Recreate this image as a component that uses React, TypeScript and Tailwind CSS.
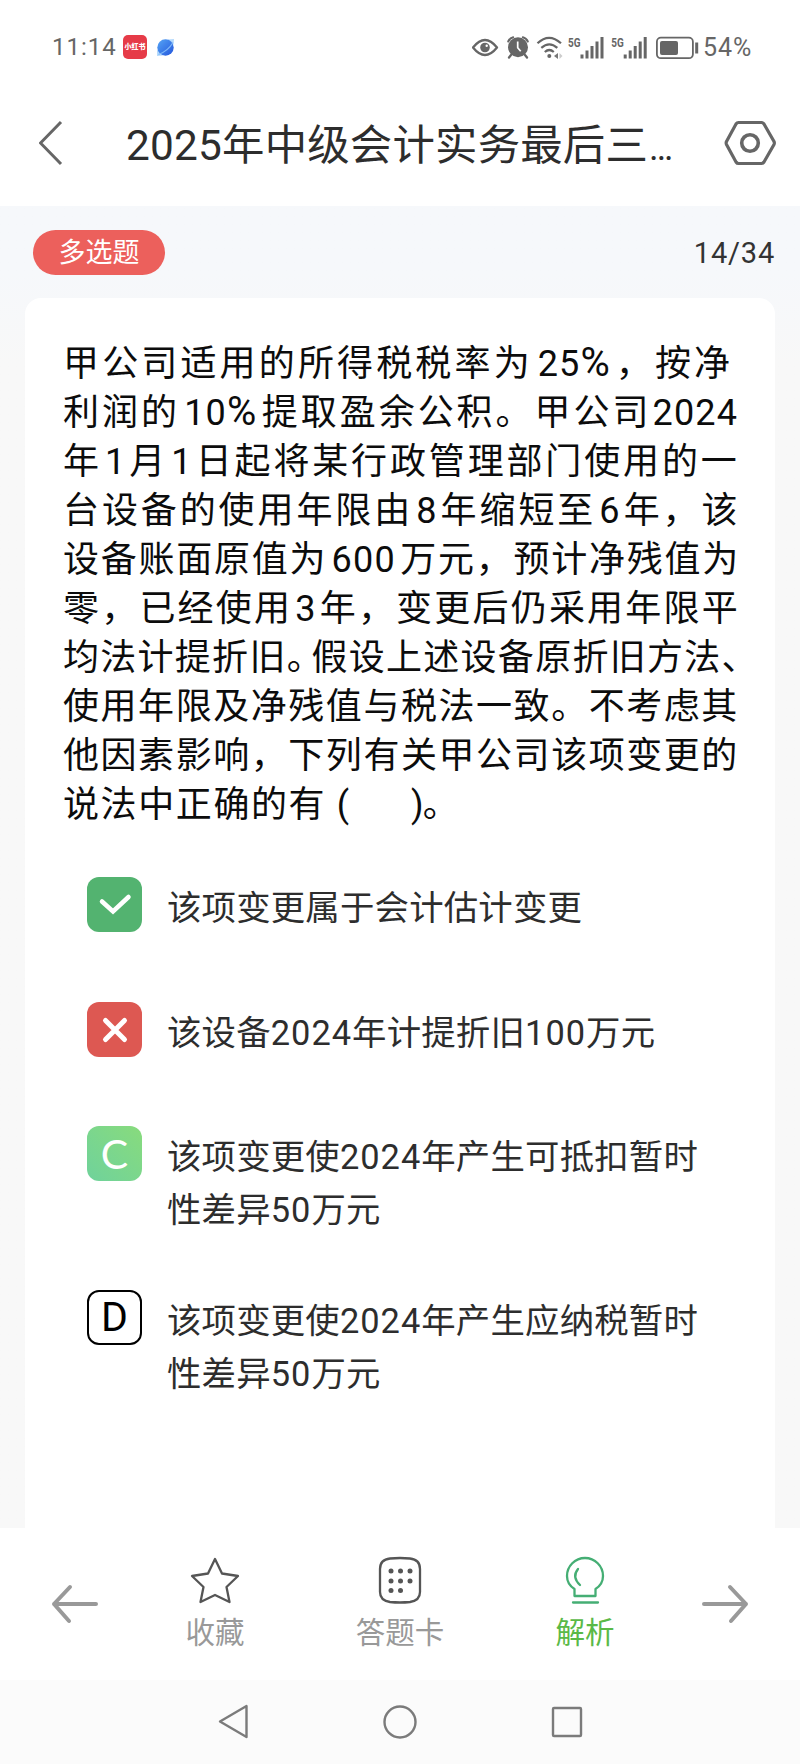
import type { ReactNode } from 'react';

// one entry per printed line, each line is spaced out to fill the column
const questionLines = [
  { text: '甲公司适用的所得税税率为25%，按净', spacing: 'tracking-[3.150px]' },
  { text: '利润的10%提取盈余公积。甲公司2024', spacing: 'tracking-[2.950px]' },
  { text: '年1月1日起将某行政管理部门使用的一', spacing: 'tracking-[2.850px]' },
  { text: '台设备的使用年限由8年缩短至6年，该', spacing: 'tracking-[2.9px]' },
  { text: '设备账面原值为600万元，预计净残值为', spacing: 'tracking-[1.750px]' },
  { text: '零，已经使用3年，变更后仍采用年限平', spacing: 'tracking-[2.2px]' },
  { text: '均法计提折旧。假设上述设备原折旧方法、', spacing: 'tracking-[1.280px]' },
  { text: '使用年限及净残值与税法一致。不考虑其', spacing: 'tracking-[1.550px]' },
  { text: '他因素影响，下列有关甲公司该项变更的', spacing: 'tracking-[1.550px]' },
  { text: '说法中正确的有 (      )。', spacing: 'tracking-[1.6px]' },
];

// width of a run of digits, by its text
const runWidth: Record<string, string> = {
  '25%': 'w-[83px]',
  '10%': 'w-[82px]',
  '2024': 'w-[88px]',
  '600': 'w-[73px]',
};

const QuestionLine = ({ text }: { text: string }) => (
  <>
    {text.split(/(\d+%?|。(?=假)|\(\s+\)。)/).map((part, i) => {
      if (part === '。' && i % 2) {
        return <span key={i} className="mr-[5.500px] [font-feature-settings:'halt']">。</span>;
      }
      if (part.startsWith('(')) {
        return (
          <span key={i} className="tracking-[1.200px]">
            {part.slice(0, -1)}
            <span className="-ml-[2px]">。</span>
          </span>
        );
      }
      if (/^\d/.test(part)) {
        return (
          <span key={i} className={`inline-block text-center tracking-[1.200px] ${runWidth[part] ?? 'w-[27.500px]'}`}>
            {part.replace('%', '')}
            {part.endsWith('%') && <span className="text-[40px] leading-none">%</span>}
          </span>
        );
      }
      return part;
    })}
  </>
);

const StatusBar = () => (
  <div className="h-[94px] pl-[52px] pr-[44px] flex items-center justify-between text-[#666]">
    <div className="flex items-center">
      <span className="w-[71px] text-2xl leading-none tracking-[1px]">11:14</span>
      <span className="w-6 h-6 rounded-[5px] bg-[#e63b48] flex items-center justify-center text-white text-[7px] font-black leading-none whitespace-nowrap">
        小红书
      </span>
      <svg className="ml-[9px]" width="19" height="19" viewBox="0 0 19 19">
        <defs>
          <linearGradient id="planet" x1="0" y1="0" x2="1" y2="1">
            <stop offset="0" stopColor="#55a4f5" />
            <stop offset="1" stopColor="#2456dc" />
          </linearGradient>
        </defs>
        <path d="M1 12L1 18L7 17.500ZM12 1.500L18 1L17.500 7Z" fill="#b5dafc" />
        <circle cx="9.500" cy="9.500" r="8.200" fill="url(#planet)" />
        <path d="M2.500 16.500Q12 13 17 4.500" fill="none" stroke="#7fb8f8" strokeWidth="1.200" />
      </svg>
    </div>

    <div className="flex items-center">
      <svg width="184" height="28" viewBox="0 0 184 28" fill="none" stroke="#666">
        {/* eye */}
        <path d="M1 14.500Q13 -0.500 25 14.500Q13 29.500 1 14.500Z" strokeWidth="2.300" strokeLinejoin="round" />
        <circle cx="13" cy="14.500" r="4.800" fill="#666" stroke="none" />
        <circle cx="14.700" cy="12.800" r="1.200" fill="#fff" stroke="none" />
        {/* alarm */}
        <circle cx="46" cy="14.300" r="10" fill="#666" stroke="none" />
        <path d="M36.200 8.500q1.500-3.500 5-4.300M50.800 4.200q3.500.8 5 4.300" strokeWidth="2" strokeLinecap="round" />
        <path d="M39 22l-2 2.500M53 22l2 2.500" strokeWidth="2.300" strokeLinecap="round" />
        <path d="M45.700 8.500v6.200l3 3.600" stroke="#fff" strokeWidth="1.700" />
        {/* wifi */}
        <path d="M65.500 10.300q11.500-11 23.500 0M69.300 14.800q8-7 16 0M72.800 19q4.500-4 9 0" strokeWidth="2.200" />
        <circle cx="77.300" cy="23" r="2" fill="#666" stroke="none" />
        <path d="M86 20v6l-4-3z" fill="#777" stroke="none" />
        <path d="M87.500 20v6l3-3z" fill="#ccc" stroke="none" />
        {/* signal bars */}
        <path d="M110 25.500v-4M115 25.500v-8M120 25.500v-12.500M125 25.500v-17M130 25.500v-21.500" strokeWidth="3" />
        <path d="M153.200 25.500v-4M158.200 25.500v-8M163.200 25.500v-12.500M168.200 25.500v-17M173.200 25.500v-21.500" strokeWidth="3" />
        <g fill="#666" stroke="none" fontSize="13" fontWeight="700" fontFamily="Roboto, sans-serif">
          <text x="96" y="13.500" textLength="12.500" lengthAdjust="spacingAndGlyphs">5G</text>
          <text x="139.300" y="13.500" textLength="12.500" lengthAdjust="spacingAndGlyphs">5G</text>
        </g>
      </svg>
      {/* battery */}
      <svg width="45" height="28" viewBox="0 0 45 28" fill="none" stroke="#666">
        <rect x="0.900" y="4.700" width="36" height="20.500" rx="4" strokeWidth="1.800" />
        <rect x="4" y="8" width="18" height="14" rx="2" fill="#666" stroke="none" />
        <path d="M40.700 9.500v11" strokeWidth="3" />
      </svg>
      <span className="ml-[2px] w-[53px] text-[25px] leading-none tracking-[1px]">54%</span>
    </div>
  </div>
);

const Header = () => (
  <div className="h-28 pl-[39px] pr-6 flex items-center justify-between">
    <svg className="mb-[14px]" width="24" height="46" viewBox="0 0 24 46" fill="none" stroke="#666" strokeWidth="3">
      <path d="M22 2L1.500 23L22 44" />
    </svg>
    <h1 className="ml-[17px] w-[552px] mb-[7px] text-[42.400px] leading-none tracking-[0.200px] whitespace-nowrap text-[#2d2d2d]">
      2025年中级会计实务最后三<span className="ml-px text-[36px]">…</span>
    </h1>
    <svg className="mb-[14px]" width="52" height="46" viewBox="0 0 52 46" fill="none" stroke="#666">
      <path d="M14.500 2.500H37.500Q39 2.500 40 4L50 21.500Q50.700 23 50 24.500L40 42Q39 43.500 37.500 43.500H14.500Q13 43.500 12 42L2.500 24.500Q1.800 23 2.500 21.500L12 4Q13 2.500 14.500 2.500Z" strokeWidth="3.200" />
      <circle cx="26" cy="23" r="8.300" strokeWidth="3.600" />
    </svg>
  </div>
);

type OptionProps = {
  badge: ReactNode;
  badgeClass: string;
  className: string;
  lines: string[];
};

const Option = ({ badge, badgeClass, className, lines }: OptionProps) => (
  <div className={`flex ${className}`}>
    <div className={`w-[55px] h-[55px] shrink-0 rounded-xl flex items-center justify-center text-[41px] leading-none ${badgeClass}`}>
      {badge}
    </div>
    <div className="ml-[25px] mt-[5px] text-[34.400px] leading-[52.500px] tracking-[0.200px] text-[#2d2d2d] whitespace-nowrap">
      {lines.map((line) => (
        <p key={line}>
          {line.split(/(\d+)/).map((part, i) => (
            i % 2 ? <span key={i} className="tracking-[1px]">{part}</span> : part
          ))}
        </p>
      ))}
    </div>
  </div>
);

const Toolbar = () => (
  <div className="h-[152px] bg-white px-[50px] flex justify-between text-[29.500px] leading-none text-[#999]">
    <svg className="mt-[54px]" width="50" height="44" viewBox="0 0 50 44" fill="none" stroke="#999" strokeWidth="4" strokeLinecap="round" strokeLinejoin="round">
      <path d="M46 22H4M20 5L4 22L19 39" />
    </svg>
    <div className="mt-7 flex">
      <div className="w-[185px] flex flex-col items-center">
        <svg width="50" height="48" viewBox="0 0 50 48" fill="none" stroke="#555" strokeWidth="2.300" strokeLinejoin="round">
          <path d="M25 3L32 17.500L48 20L36.500 31L39.500 46L25 39L10.500 46L13.500 31L2 20L18 17.500Z" />
        </svg>
        <span className="mt-[15px]">收藏</span>
      </div>
      <div className="w-[185px] flex flex-col items-center">
        <svg width="44" height="48" viewBox="0 0 44 48" fill="none" stroke="#555" strokeWidth="2.300">
          <path d="M12 2.500Q22 1.500 32 2.500Q42 3.500 42 13V36Q42 44.500 32 46Q22 47 12 46Q2 44.500 2 36V13Q2 3.500 12 2.500Z" />
          <g fill="#555" stroke="none">
            <circle cx="13" cy="15" r="2.500" />
            <circle cx="22.500" cy="15" r="2.500" />
            <circle cx="32" cy="15" r="2.500" />
            <circle cx="13" cy="25" r="2.500" />
            <circle cx="22.500" cy="25" r="2.500" />
            <circle cx="32" cy="25" r="2.500" />
            <circle cx="13" cy="34.500" r="2.500" />
            <circle cx="22.500" cy="34.500" r="2.500" />
          </g>
        </svg>
        <span className="mt-[15px]">答题卡</span>
      </div>
      <div className="w-[185px] flex flex-col items-center text-[#5ab947]">
        <svg width="42" height="48" viewBox="0 0 42 48" fill="none" stroke="#45ae74" strokeWidth="2.300">
          <path d="M10.500 40V33C5 29.500 3 25 3 20A18 18 0 0 1 39 20C39 25 37 29.500 31.500 33V40Z" strokeLinejoin="round" />
          <path d="M14 13Q7.500 21 16 29M9 46.500H34" strokeLinecap="round" />
        </svg>
        <span className="mt-[15px]">解析</span>
      </div>
    </div>
    <svg className="mt-[54px]" width="50" height="44" viewBox="0 0 50 44" fill="none" stroke="#999" strokeWidth="4" strokeLinecap="round" strokeLinejoin="round">
      <path d="M4 22H46M30 5L46 22L31 39" />
    </svg>
  </div>
);

const SystemNav = () => (
  <div className="h-[84px] bg-[#fbfbfb] px-[216px] flex items-center justify-between">
    <svg width="34" height="38" viewBox="0 0 34 38" fill="none" stroke="#7b7b7b" strokeWidth="2.400" strokeLinejoin="round">
      <path d="M30.500 3V34L4 18.500Z" />
    </svg>
    <svg width="36" height="36" viewBox="0 0 36 36" fill="none" stroke="#7b7b7b" strokeWidth="2.400">
      <circle cx="18" cy="18" r="15.500" />
    </svg>
    <svg width="34" height="34" viewBox="0 0 34 34" fill="none" stroke="#7b7b7b" strokeWidth="2.400">
      <rect x="3" y="3" width="28" height="28" rx="1" />
    </svg>
  </div>
);

const App = () => {
  return (
    <div lang="zh-CN" className="w-[800px] h-[1764px] overflow-hidden bg-white flex flex-col font-[Roboto,'Noto_Sans_CJK_SC',sans-serif]">
      <StatusBar />
      <Header />

      <main className="h-[1322px] px-[25px] bg-linear-to-b from-[#f6f8fb] from-5% to-[#f8f8f8] to-12%">
        <div className="h-[92px] pl-2 flex items-center justify-between">
          <span className="w-[132px] h-[45px] pt-[2px] rounded-full bg-[#ec605c] text-white text-[27px] leading-none flex items-center justify-center">
            多选题
          </span>
          <span className="mt-[2px] text-[29px] leading-none tracking-[0.800px] text-[#333]">14/34</span>
        </div>

        {/* Question card */}
        <div className="h-[1230px] rounded-t-2xl bg-white pl-[38px] pt-[42px]">
          <div className="h-[490px] text-[36px] leading-[49px] text-[#0c0c0c] whitespace-pre">
            {questionLines.map((line) => (
              <p key={line.text} className={`h-[49px] ${line.spacing}`}>
                <QuestionLine text={line.text} />
              </p>
            ))}
          </div>

          <div className="pl-6">
            <Option
              className="mt-[47px] h-[125px]"
              badgeClass="bg-[#53b370]"
              badge={
                <svg width="36" height="24" viewBox="0 0 36 24" fill="none" stroke="#fff" strokeWidth="4.500" strokeLinecap="round">
                  <path d="M5 8.500L16 18.500L31.500 4" />
                </svg>
              }
              lines={['该项变更属于会计估计变更']}
            />
            <Option
              className="h-[124px]"
              badgeClass="bg-[#dd5852]"
              badge={
                <svg width="28" height="28" viewBox="0 0 28 28" fill="none" stroke="#fff" strokeWidth="5" strokeLinecap="round">
                  <path d="M4.500 4.500L23.500 23.500M23.500 4.500L4.500 23.500" />
                </svg>
              }
              lines={['该设备2024年计提折旧100万元']}
            />
            <Option
              className="h-[164px]"
              badgeClass="bg-linear-to-tr from-[#6fd29b] to-[#88db7c] text-white font-[Lato]"
              badge="C"
              lines={['该项变更使2024年产生可抵扣暂时', '性差异50万元']}
            />
            <Option
              className="h-[164px]"
              badgeClass="border-2 border-black text-black"
              badge="D"
              lines={['该项变更使2024年产生应纳税暂时', '性差异50万元']}
            />
          </div>
        </div>
      </main>

      <Toolbar />
      <SystemNav />
    </div>
  );
};

export default App;
